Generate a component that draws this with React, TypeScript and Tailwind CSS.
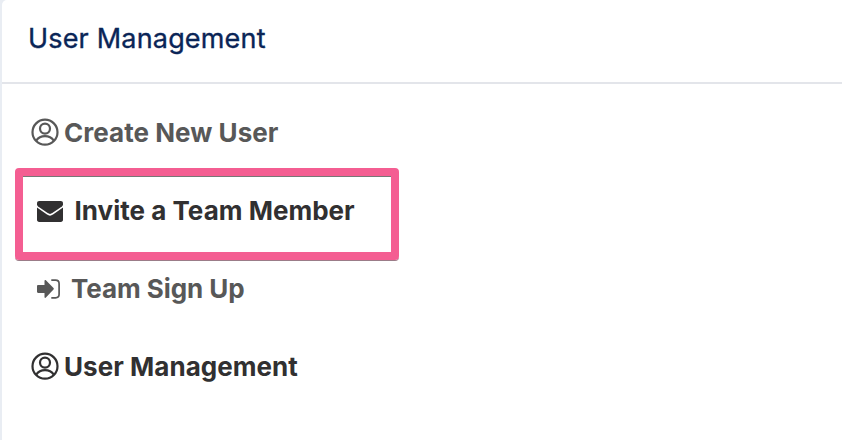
import type { ReactNode } from "react";

function UserCircle() {
  return (
    <svg viewBox="0 0 28 28" className="mb-[2px] ml-[31px] h-7 w-7 shrink-0" fill="none" stroke="currentColor" strokeWidth="2.200">
      <circle cx="14" cy="14.200" r="12.500" />
      <circle cx="14" cy="10.600" r="5" />
      <path d="M5.200 22.700C7.300 19.500 10.200 18.100 14 18.100s6.700 1.400 8.800 4.600" />
    </svg>
  );
}

function Envelope() {
  return (
    <svg viewBox="0 0 26 21" className="ml-[37px] h-[21px] w-[26px] shrink-0" fill="currentColor">
      <path d="M2.200 0h21.600C25.100 0 26 .9 26 2.200v1.300c0 .8-.4 1.400-1.100 1.900l-9.600 6.700c-1.600 1.100-3 1.100-4.600 0L1.100 5.400C.4 4.900 0 4.300 0 3.500V2.200C0 .9.9 0 2.200 0z" />
      <path d="M0 6.600l10 7c2.100 1.500 3.900 1.500 6 0l10-7v12.200c0 1.300-.9 2.200-2.200 2.200H2.200C.9 21 0 20.100 0 18.800z" />
    </svg>
  );
}

function SignIn() {
  return (
    <svg viewBox="0 0 24 20" className="ml-[37px] h-5 w-6 shrink-0" fill="none">
      <path d="M1.200 6H7.500V1.800c0-.9.8-1.200 1.400-.6l7.600 7.900c.5.500.5 1 0 1.500l-7.600 8c-.6.600-1.400.3-1.400-.6V14H1.200C.5 14 0 13.500 0 12.800V7.200C0 6.500.5 6 1.200 6z" fill="currentColor" />
      <path d="M14.300 1.200h4.200c2 0 3.600 1.500 3.600 3.500v10.600c0 2-1.600 3.500-3.600 3.500h-4.200" stroke="currentColor" strokeWidth="1.700" />
    </svg>
  );
}

function Item({ icon, label, className, gap }: { icon: ReactNode; label: string; className: string; gap: string }) {
  return (
    <li className={`flex h-[78px] items-center ${className}`}>
      {icon}
      <span className={`whitespace-nowrap text-[26px] leading-8 font-bold ${gap}`}>{label}</span>
    </li>
  );
}

export default function App() {
  return (
    <div className="h-[440px] w-[842px] overflow-hidden bg-[#e9edf3] pl-[2px] font-['Inter',sans-serif]">
      <main className="h-full rounded-tl-[5px] bg-white">
        <header className="flex h-[84px] items-center border-b-2 border-[#e3e5ea] pb-[5px] pl-[26px]">
          <h1 className="whitespace-nowrap text-[27px] leading-8 font-normal tracking-[0.18px] text-[#0a2557] [-webkit-text-stroke:0.35px_#0a2557]">User Management</h1>
        </header>
        <ul className="-ml-[2px] pt-[10px]">
          <Item icon={<UserCircle />} label="Create New User" className="text-[#585858]" gap="ml-[5px] tracking-[0.04px]" />
          <li className="relative">
            <ul>
              <Item icon={<Envelope />} label="Invite a Team Member" className="text-[#313031]" gap="ml-[11.5px] tracking-[0.02px]" />
            </ul>
            <div className="absolute -top-[4px] left-[15px] h-[92px] w-[384px] rounded-[4px] border-8 border-[#f45e92] shadow-[inset_0_1px_0_#777,0_1px_0_#9b7c88]" />
          </li>
          <Item icon={<SignIn />} label="Team Sign Up" className="text-[#585858]" gap="ml-[10px] tracking-[-0.06px]" />
          <Item icon={<UserCircle />} label="User Management" className="text-[#313031]" gap="ml-[5px] tracking-[0.04px]" />
        </ul>
      </main>
    </div>
  );
}
